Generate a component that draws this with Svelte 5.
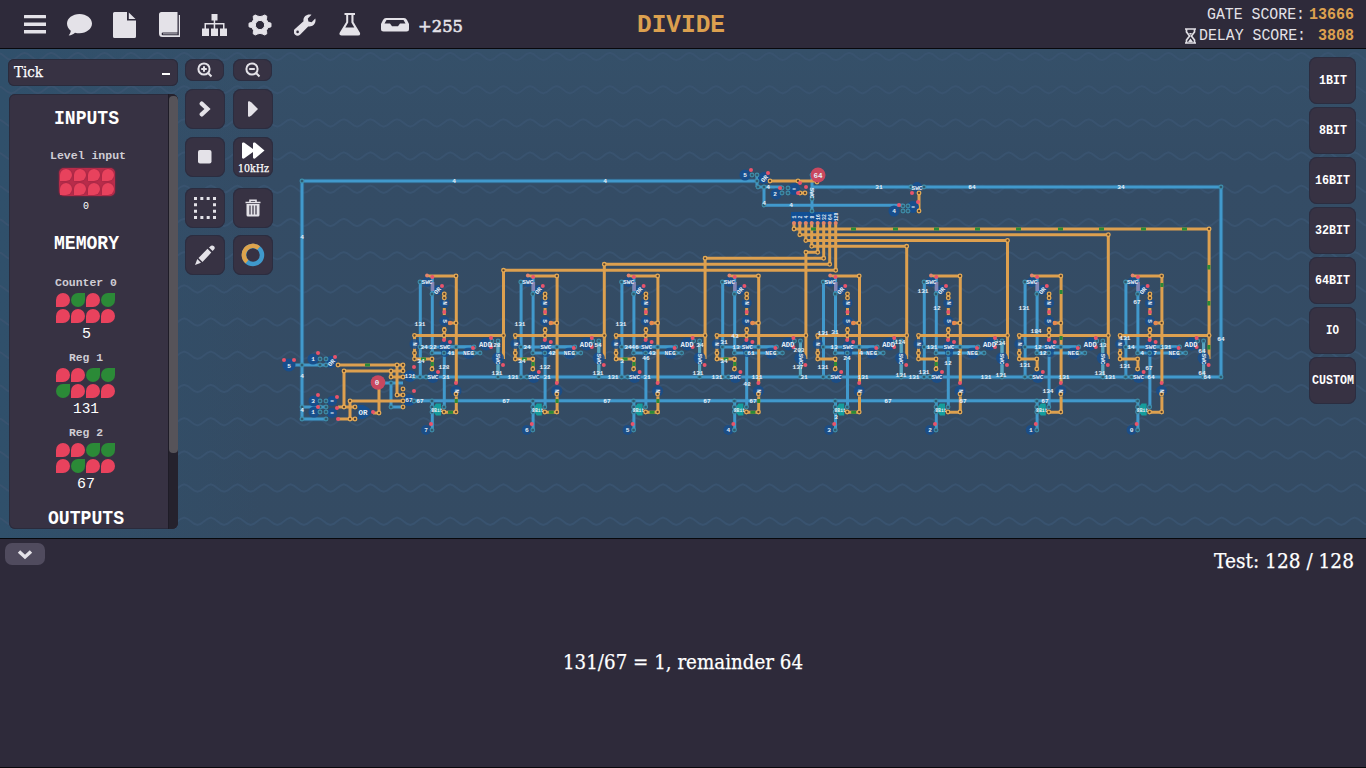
<script>
  const O = '#dda04f', B = '#4199cc';
  const idx = [0, 1, 2, 3, 4, 5, 6, 7];
  const PITCH = 100.8;
  const tops = [270.3, 264.3, 258.3, 252.3, 246.3, 240.5, 234.7, 229];
  const busX = [835.7, 829.7, 823.7, 817.7, 811.7, 805.8, 799.8, 794];
  const waves = Array.from({ length: 16 }, (_, i) => 52.8 + i * 33.2);

  function wave(y) {
    let d = `M-2 ${y}`;
    for (let i = 0; i < 53; i++) d += ` l3.3 1.2 l6.7 5 l3.3 1.2 l3.3 -1.2 l6.7 -5 l3.3 -1.2`;
    return d;
  }

  function bus(i) {
    const x = 503.5 + PITCH * i;
    return i === 3
      ? `M${busX[3]} 222V252.3H${x}V359`
      : `M${busX[i]} 222V${tops[i]}H${x}V359`;
  }

  // node centres inside one stage, at the position of the first stage
  const blueNodes = [[420, 282], [432, 294], [420, 347], [432, 353], [444, 353], [456, 347], [474, 347], [480, 353], [498, 341], [498, 377], [420, 377], [426, 377], [432, 401], [432, 407], [444, 407], [432, 412], [432, 430], [474, 353], [492, 341]];
  const orangeNodes = [[456, 276], [456, 323], [414.5, 335.5], [414.5, 353], [414.5, 359], [432, 359], [432, 369], [444.3, 294], [444.3, 298], [444.3, 330], [503.5, 335.5], [444, 335.5], [444, 412], [456, 412], [456, 394]];
  const redDots = [[432.3, 277], [442, 286], [444.3, 312], [450, 323], [450, 342], [444, 340], [473, 348], [491, 338], [503, 365], [438, 372], [456, 383], [431, 424], [491, 347]];
  const blobs = [[427, 282, 5], [438, 290, 5], [444.3, 303, 5], [444.3, 321, 5], [414.5, 344, 5], [445, 347, 6], [445, 353, 4], [469, 353, 6], [486, 344, 6.5], [498, 358, 6], [433, 377, 6], [456, 391, 5.5], [426, 430, 5]];

  const labels = [
    ['4', 454, 181], ['4', 605, 181], ['31', 879, 187], ['64', 972, 187], ['34', 1121, 187], ['4', 791, 205], ['4', 764, 203], ['4', 302, 237], ['4', 302, 376], ['4', 302, 410],
    ['131', 420, 324], ['128', 495, 345], ['34', 421, 361], ['34', 424, 347], ['32', 433, 347], ['128', 444, 367], ['131', 497, 373], ['31', 446, 377], ['41', 451, 353], ['67', 420, 401], ['67', 506, 401],
    ['131', 520, 324], ['54', 598, 345], ['34', 522, 361], ['34', 527, 347], ['132', 545, 367], ['131', 598, 373], ['131', 513, 377], ['31', 547, 377], ['42', 552, 353], ['131', 613, 377], ['67', 607, 401],
    ['131', 621, 324], ['34', 628, 347], ['46', 635, 347], ['34', 700, 345], ['3', 622, 361], ['46', 646, 358], ['43', 652, 353], ['31', 647, 377], ['131', 698, 373], ['67', 707, 401], ['67', 753, 401],
    ['31', 724, 342], ['43', 735, 336], ['13', 736, 347], ['34', 724, 361], ['61', 751, 353], ['131', 717, 377], ['131', 757, 377], ['48', 747, 384], ['203', 799, 350], ['137', 798, 367], ['31', 804, 377],
    ['131', 823, 333], ['31', 835, 332], ['13', 834, 347], ['24', 847, 358], ['131', 823, 367], ['3', 836, 417], ['131', 863, 377], ['4', 861, 353],
    ['124', 900, 342], ['131', 923, 291], ['12', 937, 308], ['131', 932, 347], ['12', 948, 363], ['131', 924, 372], ['131', 914, 377], ['131', 901, 375], ['131', 986, 377], ['131', 1001, 375], ['2', 959, 353], ['234', 1000, 343], ['67', 888, 401], ['67', 963, 401],
    ['131', 1024, 308], ['184', 1036, 331], ['12', 1038, 347], ['131', 1025, 365], ['12', 1043, 353], ['134', 1048, 391], ['67', 1045, 401], ['131', 1064, 377], ['131', 1100, 373], ['131', 1110, 377], ['13', 1103, 345],
    ['67', 1137, 302], ['131', 1125, 338], ['14', 1131, 347], ['131', 1166, 347], ['4', 1142, 353], ['7', 1155, 353], ['131', 1125, 366], ['67', 1149, 368], ['64', 1151, 377], ['64', 1202, 351], ['64', 1202, 373], ['64', 1207, 377], ['64', 1221, 339],
  ];

  const looseBlobs = [[745, 175, 5.5], [764, 178, 6], [776, 194, 5.5], [794, 189, 6], [894, 211, 5.5], [913, 207, 6], [289, 365, 6.5], [313, 359, 5.5], [331, 362, 6], [314, 401, 5.5], [314, 412, 5.5], [332, 401, 5], [332, 413, 5], [410, 376, 6], [409, 400, 6], [917, 187, 5]];
  const looseLabels = [['5', 745, 175], ['2', 775, 194], ['=', 794, 189], ['4', 894, 211], ['=', 913, 207], ['5', 289, 366], ['1', 313, 359], ['3', 313, 401], ['1', 313, 412], ['=', 332, 401], ['=', 332, 413], ['131', 410, 376], ['67', 409, 400], ['SWC', 917, 188], ['4', 768, 187]];
  const looseBlue = [[752, 175], [757, 175], [757, 181], [764, 187], [764, 205], [758, 187], [782, 188], [788, 188], [782, 193], [788, 193], [812, 175], [812, 199], [812, 211], [903, 206], [908, 206], [903, 211], [908, 211], [911, 187], [924, 187], [1221, 187], [1221, 377], [302, 181], [302, 365], [302, 407], [302, 419], [320, 359], [326, 359], [326, 365], [320, 365], [320, 401], [326, 401], [320, 407], [326, 407], [320, 412], [326, 412], [326, 419], [391, 383], [391, 407], [414, 377], [414, 401]];
  const looseOrange = [[770, 181], [798, 181], [817, 182], [800, 193], [805, 193], [919, 193], [919, 211], [338, 365], [403, 365], [397, 365], [403, 371], [344, 371], [391, 371], [391, 377], [403, 377], [350, 401], [344, 407], [350, 419], [355, 407], [355, 419], [379, 413], [397, 395], [403, 395], [403, 401], [403, 389], [403, 407]];
  const looseRed = [[751, 170], [768, 173], [780, 188], [800, 183], [806, 187], [798, 193], [912, 193], [918, 202], [899, 205], [294, 360], [318, 353], [335, 357], [318, 395], [318, 407], [337, 397], [337, 408], [338, 419], [373, 412], [414, 367], [414, 391], [284, 360]];

  const input = { name: 'Level input', nw: 76 };
  const regs = [
    { name: 'Counter 0', nw: 62, bits: '01010000', value: '5', vw: 9 },
    { name: 'Reg 1', nw: 34, bits: '00111000', value: '131', vw: 26 },
    { name: 'Reg 2', nw: 34, bits: '00110100', value: '67', vw: 18 },
  ];
  const cats = [['1BIT', 28], ['8BIT', 28], ['16BIT', 35], ['32BIT', 35], ['64BIT', 35], ['IO', 13], ['CUSTOM', 42]];
</script>

{#snippet fit(t, w, h, fs, cls)}
  <svg class="fit {cls}" width={w} height={h}>
    <text x="0" y={h - 0.8} font-size={fs} textLength={w} lengthAdjust="spacingAndGlyphs">{t}</text>
  </svg>
{/snippet}

<div class="screen">
  <header>
    <nav>
      <span><svg width="22" height="19" viewBox="0 0 22 19"><path d="M0 .5Q0 0 .5 0H21.500Q22 0 22 .5V3.300H0zM0 7.500H22V11H0zM0 15H22V18Q22 18.500 21.500 18.500H.5Q0 18.500 0 18z" /></svg></span>
      <span><svg width="25" height="22" viewBox="0 0 25 22"><path d="M12.500 0C19.400 0 25 4.300 25 9.600s-5.600 9.700-12.500 9.700c-1.600 0-3.100-.2-4.500-.6C6.500 20 4.400 21.400 1.700 21.400c1.200-1.400 1.900-3 2.100-4.600C1.400 15 0 12.500 0 9.600 0 4.300 5.600 0 12.500 0z" /></svg></span>
      <span><svg width="23" height="26" viewBox="0 0 23 26"><path d="M1.500 0H14v8.500H23V24.500Q23 26 21.500 26H1.500Q0 26 0 24.500V1.500Q0 0 1.500 0zM15.800 .5L22.500 7H15.800z" /></svg></span>
      <span><svg width="22" height="26" viewBox="0 0 22 26"><path fill-rule="evenodd" d="M2.500 0H18.500V20.500H4a1.400 1.400 0 0 0 0 2.800H19.800V3H21V25H3.500Q0 25 0 21.500V2.500Q0 0 2.500 0zM4 21.500H18.500V22.300H4z" /></svg></span>
      <span><svg width="25" height="22" viewBox="0 0 25 22"><path d="M9.500 0h6v6.500h-2.300V9H22.500v5.500H25V22h-7v-7.500h3V10.500h-7.800v4H16V22H9v-7.500h2.700v-4H4v4H7V22H0v-7.500h2.500V9h9.200V6.500H9.500z" /></svg></span>
      <span><svg width="24" height="24" viewBox="-12 -12 24 24"><path fill-rule="evenodd" stroke="#e4e2e8" stroke-width="1" stroke-linejoin="round" d="M-3 -7.200L-4.800 -10L-2.500 -9L0 -8.300L2.500 -9L4.800 -10L6.800 -8.800L6.500 -5.500L7.800 -2.800L11 -1.800V1.800L7.800 2.800L6.500 5.500L6.800 8.800L4.800 10L2.500 9L0 8.300L-2.500 9L-4.800 10L-6.800 8.800L-6.500 5.500L-7.800 2.800L-11 1.800V-1.800L-7.800 -2.800L-6.500 -5.500L-6.800 -8.800L-4.800 -10zM0 -4.600a4.600 4.600 0 1 0 0 9.200a4.600 4.600 0 1 0 0 -9.200z" /></svg></span>
      <span><svg width="22" height="22" viewBox="0 0 22 22"><path fill-rule="evenodd" d="M17.500 .7L13.800 4.400L14.400 7.600L17.600 8.200L21.300 4.500C22.500 9 19 13.200 14.200 12.400L6.300 20.500A3.800 3.800 0 0 1 .9 15L9.500 7.200C8.700 2.600 13 -.6 17.500 .7zM3.600 16.600a1.300 1.300 0 1 0 0 2.600a1.300 1.300 0 0 0 0 -2.600z" /></svg></span>
      <span><svg width="22" height="23" viewBox="0 0 22 23"><path fill-rule="evenodd" d="M5.500 0H16V2H14.500V9L20.800 19.500Q22 22.500 19 22.500H2.500Q-.5 22.500 .8 19.500L7.200 9V2H5.500zM9.200 2V9.600L6.300 14.500H15.300L12.400 9.600V2z" /></svg></span>
      <span><svg width="28" height="14" viewBox="0 0 28 14"><path fill-rule="evenodd" d="M5 0H23Q25 0 26 2L28 6V11Q28 13.500 25.500 13.500H2.500Q0 13.500 0 11V6L2 2Q3 0 5 0zM5.500 2L3.500 5.500H9L11 8.300H17L19 5.500H24.500L22.500 2z" /></svg></span>
      <span class="plus">{@render fit('+255', 45, 13, 17.5, 'slab')}</span>
    </nav>
    <h1>{@render fit('DIVIDE', 88, 17, 25.5, 'mono bold orange')}</h1>
    <div class="scores">
      <div>{@render fit('GATE SCORE:', 98, 11, 16, 'mono')}{@render fit('13666', 45, 11, 16.5, 'mono bold orange')}</div>
      <div>
        <svg class="glass" width="11" height="16" viewBox="0 0 11 16"><path d="M0 1h11M0 15h11M1.500 1V4L4.600 8L1.500 12V15M9.500 1V4L6.400 8L9.500 12V15" fill="none" stroke="#e2e0e6" stroke-width="1.700" /><path d="M3 14L5.500 10.500L8 14zM4 5h3L5.500 7z" /></svg>
        {@render fit('DELAY SCORE:', 107, 11, 16, 'mono')}{@render fit('3808', 36, 11, 16.5, 'mono bold orange delay')}
      </div>
    </div>
  </header>

  <main>
    <svg class="board" width="1366" height="489" viewBox="0 49 1366 489">
      <g class="waves">{#each waves as y}<path d={wave(y)} />{/each}</g>

      <g fill="none" stroke="#2c5f86" stroke-width="5" opacity=".45">
        <path d="M757 181H302V419H326M812 187H1221V377H414M414 400.700H1134" />
      </g>
      <g fill="none" stroke={B} stroke-width="3">
        <path d="M757 175V181H302V419H326M302 407H326M289 365H326M758 187H782M764 187V205.300H903M757 181V187M812 175V212M812 187H1221V377H414M414 400.700H1138M383 383H403M391 383V407H403" />
        {#each idx as i}
          <path transform="translate({PITCH * i} 0)" d="M432 282H420.300V377M432.300 277V353H480M420.300 347H474M444.300 353V407M498 341V377M432.300 401V430" />
        {/each}
      </g>
      <g fill="none" stroke={O} stroke-width="3">
        {#each idx as i}
          <path d={bus(i)} />
          <path transform="translate({PITCH * i} 0)" d="M427 276H456.300V383M450 323H456M414.500 335.500H503.500M414.500 335.500V359H432.300V369M444.300 294V300M444.300 308V315M444.300 327V340M456.300 394V412.300H444" />
        {/each}
        <path d="M770 181H817M798 193H805M919 193V211M338 365H403M403 371H344V407M350 401H403M350 401V419M338 407H355M338 419H355M379 389V413H373M397 365V395H403M391 371V377H403M403 365V371" />
      </g>

      <g fill="#2c8a36">
        {#each [813, 853, 895, 936, 977, 1018, 1060, 1101, 1143, 1184] as x}<rect x={x - 2} y="227.500" width="5" height="3" />{/each}
        {#each [265, 301, 345] as y}<rect x="1207.400" {y} width="3" height="4.500" />{/each}
        <rect x="365" y="363.500" width="5" height="3" />
        <rect x="1059.600" y="290" width="3" height="4" /><rect x="1059.600" y="336" width="3" height="4" /><rect x="1160.400" y="283" width="3" height="4" />
        {#each idx as i}
          {#if i < 4}
            <rect x={454.800 + PITCH * i} y="399" width="3" height="4" />
            <rect x={421 + PITCH * i} y="357.500" width="5" height="3" />
          {/if}
          {#if i < 5}<rect x={448 + PITCH * i} y="410.800" width="5" height="3" />{/if}
          {#if i < 6}<rect x={430.800 + PITCH * i} y="362" width="3" height="4" />{/if}
        {/each}
      </g>

      <path d="M791 212H837V219L834 222H791z" fill="#114f94" />
      <path d="M357 405H363Q369 407 372 412Q369 417 363 419H357Q361 412 357 405z" fill="#174f8d" />
      <g fill="#184e8c">
        {#each looseBlobs as [x, y, r]}<circle cx={x} cy={y} {r} />{/each}
        {#each idx as i}{#each blobs as [x, y, r]}<circle cx={x + PITCH * i} cy={y} {r} opacity=".85" />{/each}{/each}
      </g>
      {#each idx as i}
        <g transform="translate({PITCH * i} 0)">
          <rect x="430.800" y="282" width="3.500" height="9" fill="#8285b6" />
          <rect x="447" y="345" width="24" height="3" fill={B} opacity=".65" />
          <path d="M436 403.500H441V415.500H436L433.500 412V407z" fill="#159d9c" />
          <path d="M496.500 341h3v12h-3zM496.500 365h3v12h-3z" fill="#5ba5bd" />
        </g>
      {/each}

      <g fill="#315b70" stroke="#3f8eaa" stroke-width="1.100">
        {#each looseBlue as [x, y]}<circle cx={x} cy={y} r="1.900" />{/each}
        {#each idx as i}{#each blueNodes as [x, y]}<circle cx={x + PITCH * i} cy={y} r="1.900" />{/each}{/each}
      </g>
      <g fill="#5a422d" stroke="#e2a956" stroke-width="1.300">
        {#each looseOrange as [x, y]}<circle cx={x} cy={y} r="1.800" />{/each}
        {#each idx as i}
          <circle cx={503.500 + PITCH * i} cy={tops[i]} r="1.800" />
          <circle cx={busX[i]} cy={tops[i]} r="1.800" />
          {#each orangeNodes as [x, y]}<circle cx={x + PITCH * i} cy={y} r="1.800" />{/each}
        {/each}
      </g>
      <g fill="#e9536b">
        {#each looseRed as [x, y]}<circle cx={x} cy={y} r="2" />{/each}
        {#each idx as i}{#each redDots as [x, y]}<circle cx={x + PITCH * i} cy={y} r="2" />{/each}
          <circle cx={busX[i]} cy="223" r="2" fill="#e2846c" />
          <circle cx={450 + PITCH * i} cy="323" r="2.200" fill="#e58a4f" />
          <circle cx={427 + PITCH * i} cy="275.500" r="1.900" fill="#e2846c" />{/each}
      </g>
      <circle cx="818" cy="175" r="7.500" fill="#c9485f" />
      <circle cx="378" cy="382.500" r="7.300" fill="#c9485f" />

      <g class="tiny">
        {#each labels as [t, x, y]}<text {x} y={y + 2}>{t}</text>{/each}
        {#each looseLabels as [t, x, y]}<text {x} y={y + 2}>{t}</text>{/each}
        {#each idx as i}
          <g transform="translate({PITCH * i} 0)">
            <text x="427" y="284">SWC</text>
            <text x="445" y="349">SWC</text>
            <text x="433" y="379">SWC</text>
            <text x="468.500" y="355">NEG</text>
            <text x="485.500" y="346.500" font-size="7.200">ADD</text>
            <text transform="translate(442.500 303) rotate(90)">N</text>
            <text transform="translate(442.500 321) rotate(90)">S</text>
            <text transform="translate(412.700 344) rotate(90)">N</text>
            <text transform="translate(454.500 391) rotate(90)">N</text>
            <text transform="translate(496.200 359) rotate(90)">SWC</text>
            <text transform="translate(439 292) rotate(-50)">OR</text>
            <text class="chip" x="437" y="411.500">8Bit</text>
            <text x="426" y="432">{7 - i}</text>
          </g>
          <text class="chip" transform="translate({busX[i] + 2} 217) rotate(-90)">{1 << (7 - i)}</text>
        {/each}
        <text class="big" x="818" y="177.500">64</text>
        <text class="big" x="377" y="385">0</text>
        <text class="big" x="363" y="414.500">OR</text>
        <text transform="translate(810 193) rotate(90)">SWC</text>
        <text transform="translate(766 180) rotate(-50)">OR</text>
        <text transform="translate(333 364) rotate(-50)">OR</text>
      </g>
    </svg>

    <aside class="left">
      <div class="select">{@render fit('Tick', 29, 11, 14.5, 'slab')}<i></i></div>
      <div class="panel">
        <div class="list">
          <div class="h">{@render fit('INPUTS', 65, 13, 19.5, 'mono bold')}</div>
          <div class="name shift">{@render fit(input.name, input.nw, 8, 11.5, 'mono bold dim')}</div>
          <div class="bits pressed">{#each idx as b}<b></b>{/each}</div>
          <div class="val0">{@render fit('0', 6, 8, 11, 'mono')}</div>
          <div class="h mem">{@render fit('MEMORY', 65, 13, 19.5, 'mono bold')}</div>
          {#each regs as r}
            <div class="reg">
              {@render fit(r.name, r.nw, 8, 11.5, 'mono bold dim')}
              <div class="bits">{#each r.bits as b}<b class:on={b === '1'}></b>{/each}</div>
              {@render fit(r.value, r.vw, 10, 15, 'mono')}
            </div>
          {/each}
          <div class="h out">{@render fit('OUTPUTS', 76, 13, 19.5, 'mono bold')}</div>
        </div>
        <div class="track"><div class="thumb"></div></div>
      </div>
    </aside>

    <div class="tools">
      <button class="pill"><svg width="16" height="16" viewBox="0 0 16 16"><path d="M10.800 10.800L14.500 14.500M4.200 7H9.800M7 4.200V9.800" /><circle cx="7" cy="7" r="5.600" /></svg></button>
      <button class="pill"><svg width="16" height="16" viewBox="0 0 16 16"><path d="M10.800 10.800L14.500 14.500M4.200 7H9.800" /><circle cx="7" cy="7" r="5.600" /></svg></button>
      <button><svg width="12" height="16" viewBox="0 0 12 16"><path d="M2.700 2.600L8.500 8L2.700 13.400" style="stroke-width:4.200;stroke-linecap:round" /></svg></button>
      <button><svg class="solid" width="12" height="16" viewBox="0 0 12 16"><path d="M1 1Q1 0 2.500 .3L4.500 1.500L11 8L4.500 14.500L2.500 15.700Q1 16 1 15z" /></svg></button>
      <button><svg class="solid" width="14" height="14" viewBox="0 0 14 14"><rect width="13.500" height="13.500" rx="2" /></svg></button>
      <button class="fast"><svg class="solid" width="23" height="17" viewBox="0 0 23 17"><path d="M0 1.500Q0 0 2 .5L11 7V1.500Q11 0 13 .5L22.500 8.500L13 16.500Q11 17 11 15.500V10L2 16.500Q0 17 0 15.500z" /></svg>{@render fit('10kHz', 31, 8, 10.5, 'slab')}</button>
      <button class="low"><svg width="22" height="22" viewBox="0 0 22 22"><path d="M1.500 1.500H20.500V20.500H1.500z" style="stroke-width:3;stroke-dasharray:3 3.330;stroke-dashoffset:1.500" /></svg></button>
      <button class="low"><svg width="16" height="18" viewBox="0 0 16 18"><path d="M.5 3.500H15.500M5 3V1.200H11V3" style="stroke-width:1.600" /><path class="f" d="M1.500 5H14.500V16Q14.500 17.500 13 17.500H3Q1.500 17.500 1.500 16z" /><path d="M5 6.500V15.500M8 6.500V15.500M11 6.500V15.500" style="stroke:#373243;stroke-width:1.200" /></svg></button>
      <button class="last"><svg class="solid" width="20" height="20" viewBox="0 0 20 20"><path d="M14 2.500L16 .8Q17.500 -.2 19 1.300Q20.500 3 19 4.500L17.600 6zM12.500 3.800L16.300 7.600L7.500 17L3.500 13zM2.300 14L6 17.800L0 20z" /></svg></button>
      <button class="last"><svg width="24" height="24" viewBox="0 0 24 24"><circle cx="12" cy="12" r="9" style="stroke:#3f99cc;stroke-width:4.500" /><path d="M6 18.700A9 9 0 0 1 17.700 5" style="stroke:#dda34c;stroke-width:4.500" /></svg></button>
    </div>

    <div class="cats">
      {#each cats as [t, w]}<button>{@render fit(t, w, 9, 13.5, 'mono bold')}</button>{/each}
    </div>
  </main>

  <footer>
    <button><svg width="16" height="11" viewBox="0 0 16 11"><path d="M2 2.500L8 8L14 2.500" fill="none" stroke="#e4e2e8" stroke-width="3.500" /></svg></button>
    <div class="test">{@render fit('Test: 128 / 128', 140, 16, 21, 'slab')}</div>
    <div class="msg">{@render fit('131/67 = 1, remainder 64', 240, 16, 21, 'slab')}</div>
  </footer>
</div>

<style>
  :global(body) { background: #2e2a3a; overflow: hidden; }
  .screen { width: 1366px; height: 768px; display: flex; flex-direction: column; overflow: hidden; color: #fff; }
  svg { display: block; fill: #e4e2e8; flex: none; }
  button { border: 0; padding: 0; margin: 0; }

  .fit { overflow: visible; fill: #fff; }
  .fit.mono { font-family: "Liberation Mono", monospace; }
  .fit.slab { font-family: "DejaVu Serif", serif; stroke: #fff; stroke-width: .25; }
  .fit.bold { font-weight: 700; }
  .fit.orange { fill: #dca04f; }
  .fit.dim { fill: #cfcdd4; }

  header { box-sizing: border-box; height: 49px; background: #2e2a3a; border-bottom: 1px solid #08080c; display: grid; grid-template-columns: 637px 1fr auto; }
  nav { display: flex; padding-left: 12px; height: 49px; align-items: center; }
  nav span { width: 45px; display: flex; justify-content: center; }
  nav .plus { padding-top: 3px; margin-left: 1px; }
  .plus .fit.slab { fill: #e4e2e8; stroke: #e4e2e8; stroke-width: .6; }
  h1 { margin: 16px 0 0; }
  .scores { display: flex; flex-direction: column; align-items: flex-end; padding: 6px 12px 0 0; gap: 4px; }
  .scores div { display: flex; align-items: center; gap: 4px; height: 17px; }
  .scores .glass { margin-right: -1px; }
  .scores .fit:not(.orange) { fill: #e4e2e8; }
  .scores .delay { margin-left: 8px; }

  main { position: relative; height: 489px; background: linear-gradient(90deg, #30506b 0, #33506900 260px), linear-gradient(#355069, #344c65 25%, #344b63); display: flex; }
  .board { position: absolute; inset: 0; }
  .waves path { fill: none; stroke: #39536f; stroke-width: 2; }
  .tiny { font: 700 6.200px "Liberation Mono", monospace; fill: #e6eef6; text-anchor: middle; }
  .tiny .chip { font-size: 4.800px; }
  .tiny .big { font-size: 7.500px; }

  .left { position: relative; width: 170px; margin-left: 8px; padding-top: 10px; }
  .select { box-sizing: border-box; height: 27px; border-radius: 6px; background: #373243; box-shadow: inset 0 0 0 1px #2a2b3c; display: flex; align-items: center; justify-content: space-between; padding: 0 8px 0 6px; }
  .select i { width: 8px; height: 2px; background: #fff; margin-top: 2px; }
  .panel { height: 435px; margin: 8px 0 0 1px; display: flex; background: #373243; border-radius: 6px; box-shadow: inset 0 0 0 1px #2a2b3c; overflow: hidden; }
  .list { width: 154px; padding-right: 5px; display: flex; flex-direction: column; align-items: center; }
  .h { margin-top: 18px; }
  .name { margin-top: 27px; }
  .shift { padding-left: 4px; }
  .bits { width: 60px; display: grid; grid-template-columns: repeat(4, 14px); gap: 2px 1px; margin: 6px 0; }
  .bits b { height: 14px; background: #e8425d; border-radius: 50% 50% 50% 0; }
  .bits b.on { background: #2b8a37; border-radius: 50% 0 50% 50%; }
  .pressed { width: 56px; gap: 0; margin: 8px 0 6px 2px; border-radius: 5px; background: #b92d4b; box-shadow: 0 0 2px #9c2946; }
  .pressed b { margin: 1px; height: 12px; box-shadow: 0 0 2px #8d203e; }
  .mem { margin-top: 27px; margin-bottom: 14px; }
  .reg { display: flex; flex-direction: column; align-items: center; margin-top: 15px; }
  .out { margin-top: 23px; }
  .track { width: 10px; background: #25222d; border-left: 1px solid #1e1c27; box-sizing: border-box; }
  .thumb { height: 357px; margin-top: 2px; border-radius: 4px; background: #565359; }

  .tools { position: relative; width: 88px; margin-left: 7px; padding-top: 10px; display: grid; grid-template-columns: 40px 40px; grid-template-rows: 22px 40px 40px 40px 40px; column-gap: 8px; row-gap: 8px; align-content: start; }
  .tools button, .cats button { background: #373243; border-radius: 8px; box-shadow: inset 0 0 0 1px #2b2d40; display: flex; align-items: center; justify-content: center; }
  .tools .pill { width: 39px; }
  .tools svg:not(.solid):not(.fit) { fill: none; stroke: #e4e2e8; stroke-width: 2; }
  .tools .f { fill: #e4e2e8; stroke: none; }
  .tools .fast { flex-direction: column; gap: 6px; }
  .tools .fast .solid { fill: #fff; margin-top: 1px; }
  .tools .low, .tools .last { position: relative; top: 3px; }
  .tools .last { top: 2px; }

  .cats { position: relative; margin: 8px 10px 0 auto; display: flex; flex-direction: column; gap: 3px; }
  .cats button { width: 47px; height: 47px; }
  .cats .fit { margin-top: -1px; }

  footer { box-sizing: border-box; height: 230px; background: #2e2a3a; border-top: 1px solid #08080c; border-bottom: 1px solid #08080c; display: grid; grid-template-columns: 1fr auto; grid-template-rows: 100px auto; align-items: start; }
  footer button { width: 40px; height: 22px; margin: 4px 0 0 5px; border-radius: 7px; background: #504b5e; display: flex; align-items: center; justify-content: center; }
  .test { margin: 14px 12px 0 0; }
  .msg { grid-column: 1 / 3; justify-self: center; margin-top: 15px; }
</style>
